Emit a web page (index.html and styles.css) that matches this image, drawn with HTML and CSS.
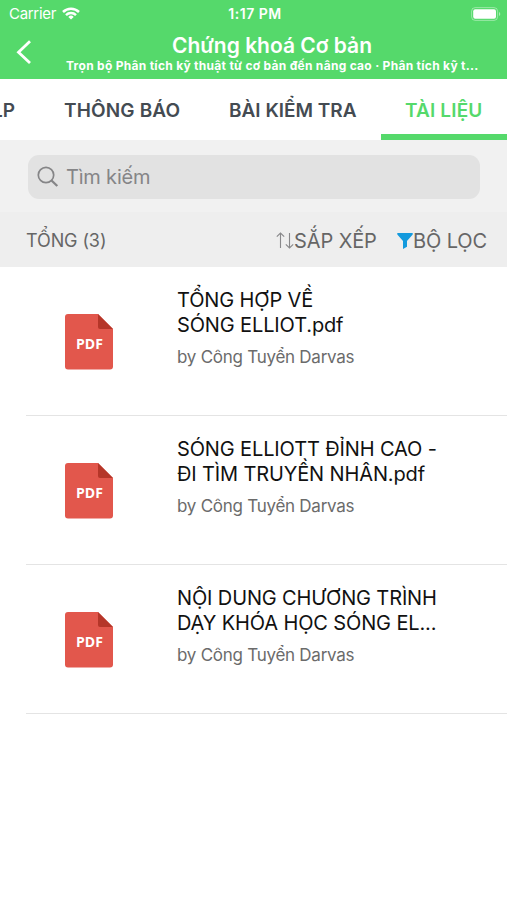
FILE: index.html
```html
<!DOCTYPE html>
<html lang="vi">

<head>
     <meta charset="UTF-8">
     <meta name="viewport" content="width=device-width, initial-scale=1.0">
     <title>Chứng khoá Cơ bản</title>
     <link rel="stylesheet" href="styles.css">
</head>

<body>
     <header class="header">
          <div class="status-bar">
               <div class="carrier">
                    <span>Carrier</span>
                    <svg width="18" height="13" viewBox="0 0 18 13" fill="none" stroke="#fff" stroke-width="2.5">
                         <path d="M1 5a11.6 11.6 0 0 1 16 0" />
                         <path d="M4 8.1a7.3 7.3 0 0 1 10 0" />
                         <path d="M9 12.6L6.3 9.9a3.8 3.8 0 0 1 5.4 0z" fill="#fff" stroke="none" />
                    </svg>
               </div>
               <span class="clock">1:17 PM</span>
               <svg class="battery" width="30" height="14" viewBox="0 0 30 14">
                    <rect x=".6" y=".6" width="26" height="12.8" rx="3.6" fill="none" stroke="#fff" stroke-opacity=".4" />
                    <rect x="2.2" y="2.2" width="22.8" height="9.6" rx="2" fill="#fff" />
                    <path d="M28 5v4a2.2 2.2 0 0 0 0-4z" fill="#fff" fill-opacity=".5" />
               </svg>
          </div>
          <div class="nav-bar">
               <svg class="back" width="16" height="24" viewBox="0 0 16 24" fill="none" stroke="#fff" stroke-width="2.8">
                    <path d="M14 1.2L2.5 12.2L14 23" />
               </svg>
               <div class="nav-title">
                    <h1>Chứng khoá Cơ bản</h1>
                    <p>Trọn bộ Phân tích kỹ thuật từ cơ bản đến nâng cao · Phân tích kỹ t...</p>
               </div>
          </div>
     </header>

     <nav class="tabs">
          <a class="tab tab-first">LP</a>
          <a class="tab tab-notice">THÔNG BÁO</a>
          <a class="tab tab-exam">BÀI KIỂM TRA</a>
          <a class="tab active">TÀI LIỆU</a>
     </nav>

     <div class="search">
          <div class="search-box">
               <svg width="22" height="22" viewBox="0 0 22 22" fill="none" stroke="#858587">
                    <circle cx="9" cy="9" r="7.7" stroke-width="1.7" />
                    <path d="M14.5 14.5L20.3 20" stroke-width="2.3" />
               </svg>
               <span>Tìm kiếm</span>
          </div>
     </div>

     <div class="toolbar">
          <span class="total">TỔNG (3)</span>
          <div class="action sort">
               <svg width="18" height="17" viewBox="0 0 18 17" fill="none" stroke="#88888a" stroke-width="1.1">
                    <path d="M4.5 16V1.2M.8 4.7L4.5 1l3.7 3.7" />
                    <path d="M13.500 1v14.8M9.8 12.300l3.700 3.700l3.700-3.700" />
               </svg>
               <span>SẮP XẾP</span>
          </div>
          <div class="action filter">
               <svg width="16" height="16" viewBox="0 0 16 16" fill="#139add">
                    <path d="M.3 0h15.400v1.500L10 8v5.800L6 16V8L.3 1.500z" />
               </svg>
               <span>BỘ LỌC</span>
          </div>
     </div>

     <ul class="documents">
          <li class="document">
               <svg class="pdf" width="48" height="56" viewBox="0 0 48 56">
                    <path d="M3 0h30l15 15v37.5a3 3 0 0 1-3 3H3a3 3 0 0 1-3-3V3a3 3 0 0 1 3-3z" fill="#e2574c" />
                    <path d="M33 0l15 15H35a2 2 0 0 1-2-2z" fill="#b53629" />
                    <text x="11" y="34.5">PDF</text>
               </svg>
               <div class="info">
                    <h2>TỔNG HỢP VỀ<br>SÓNG ELLIOT.pdf</h2>
                    <p>by Công Tuyển Darvas</p>
               </div>
          </li>
          <li class="document">
               <svg class="pdf" width="48" height="56" viewBox="0 0 48 56">
                    <path d="M3 0h30l15 15v37.5a3 3 0 0 1-3 3H3a3 3 0 0 1-3-3V3a3 3 0 0 1 3-3z" fill="#e2574c" />
                    <path d="M33 0l15 15H35a2 2 0 0 1-2-2z" fill="#b53629" />
                    <text x="11" y="34.5">PDF</text>
               </svg>
               <div class="info">
                    <h2>SÓNG ELLIOTT ĐỈNH CAO -<br>ĐI TÌM TRUYỀN NHÂN.pdf</h2>
                    <p>by Công Tuyển Darvas</p>
               </div>
          </li>
          <li class="document">
               <svg class="pdf" width="48" height="56" viewBox="0 0 48 56">
                    <path d="M3 0h30l15 15v37.5a3 3 0 0 1-3 3H3a3 3 0 0 1-3-3V3a3 3 0 0 1 3-3z" fill="#e2574c" />
                    <path d="M33 0l15 15H35a2 2 0 0 1-2-2z" fill="#b53629" />
                    <text x="11" y="34.5">PDF</text>
               </svg>
               <div class="info">
                    <h2>NỘI DUNG CHƯƠNG TRÌNH<br>DẠY KHÓA HỌC SÓNG EL...</h2>
                    <p>by Công Tuyển Darvas</p>
               </div>
          </li>
     </ul>
</body>

</html>
```

FILE: styles.css
```css
* {
     box-sizing: border-box;
     margin: 0;
     padding: 0;
}

body {
     font-family: Inter, Roboto, sans-serif;
     background-color: #fff;
     color: #111;
     overflow: hidden;
}

svg {
     display: block;
     flex: none;
}

.header {
     height: 79px;
     background-color: #55d96b;
     color: #fff;
}

.status-bar {
     display: grid;
     grid-template-columns: 1fr auto 1fr;
     align-items: center;
     height: 27px;
     padding: 0 6px 0 9px;
     font-size: 15px;
}

.carrier {
     display: flex;
     align-items: center;
     gap: 6px;
     letter-spacing: -0.3px;
}

.clock {
     font-size: 14px;
     font-weight: 600;
     letter-spacing: 0.5px;
}

.battery {
     justify-self: end;
}

.nav-bar {
     display: flex;
     padding-left: 16px;
}

.back {
     margin-top: 13px;
}

.nav-title {
     flex: 1;
     padding: 6px 0 0 34px;
     white-space: nowrap;
}

.nav-title h1 {
     width: 412px;
     font-size: 21px;
     font-weight: 600;
     line-height: 26px;
     text-align: center;
}

.nav-title p {
     font-size: 12px;
     font-weight: 700;
     line-height: 14px;
     letter-spacing: 0.29px;
}

.tabs {
     display: flex;
     height: 61px;
     overflow: hidden;
     white-space: nowrap;
     color: #444b52;
     font-size: 19px;
     font-weight: 600;
     line-height: 63px;
}

.tab-first {
     width: 64px;
     text-indent: -8px;
}

.tab-notice {
     width: 165px;
     letter-spacing: 0.15px;
}

.tab-exam {
     width: 152px;
}

.tab.active {
     flex: 1;
     padding-left: 24px;
     border-bottom: 6px solid #55d96b;
     color: #55d96b;
     letter-spacing: 0.15px;
}

.search {
     height: 72px;
     padding: 15px 27px 0 28px;
     background-color: #f1f1f1;
}

.search-box {
     display: flex;
     align-items: center;
     gap: 7px;
     height: 44px;
     padding-left: 9px;
     border-radius: 11px;
     background-color: #e2e2e2;
     color: #858587;
     font-size: 20px;
     letter-spacing: -0.2px;
}

.toolbar {
     display: flex;
     align-items: center;
     height: 55px;
     padding: 2px 0 0 26px;
     background-color: #eee;
     color: #666;
     white-space: nowrap;
}

.total {
     width: 250px;
     font-size: 18px;
     letter-spacing: -0.1px;
}

.action {
     display: flex;
     align-items: center;
     font-size: 20px;
     letter-spacing: -0.1px;
}

.sort {
     width: 121px;
}

.documents {
     list-style: none;
}

.document {
     display: flex;
     height: 149px;
     margin-left: 26px;
     padding-left: 39px;
     border-bottom: 1px solid #e4e4e4;
}

.pdf {
     margin-top: 47px;
}

.pdf text {
     font-family: "Open Sans", sans-serif;
     font-size: 14px;
     font-weight: 700;
     fill: #fff;
}

.info {
     padding: 21px 0 0 64px;
     white-space: nowrap;
}

.info h2 {
     font-size: 20px;
     font-weight: 400;
     line-height: 24.5px;
     letter-spacing: -0.13px;
}

.info p {
     margin-top: 10px;
     color: #6b6b6b;
     font-size: 17px;
     line-height: 21px;
     letter-spacing: -0.26px;
}
```
